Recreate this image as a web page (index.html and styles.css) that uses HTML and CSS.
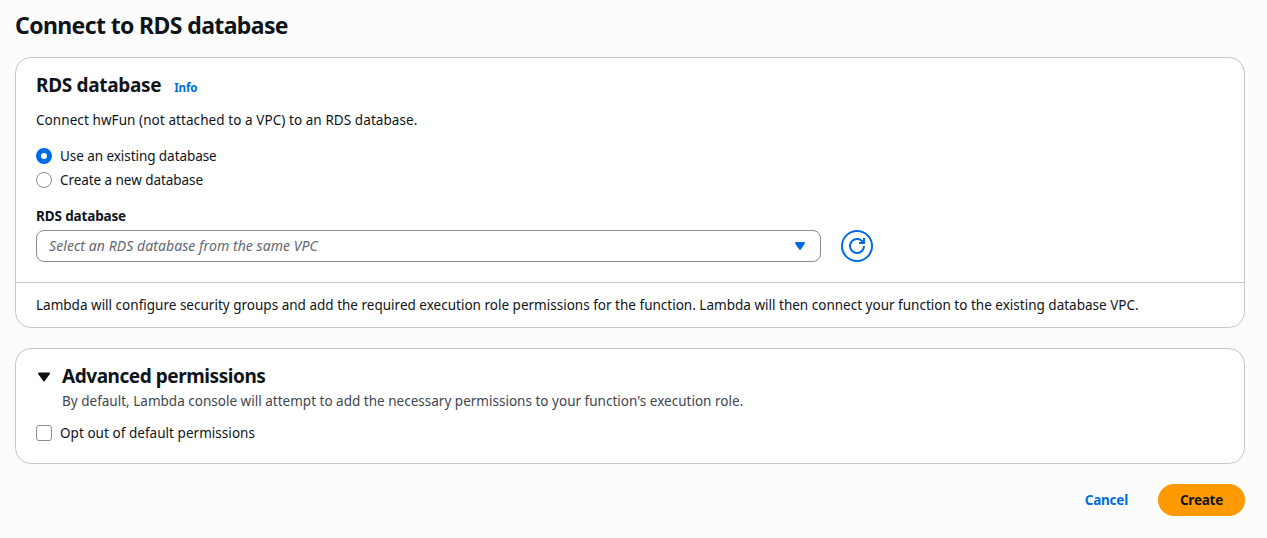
FILE: index.html
```html
<!DOCTYPE html>
<html lang="en">
<head>
<meta charset="utf-8">
<title>Connect to RDS database</title>
<link rel="stylesheet" href="styles.css">
</head>
<body>
<main class="page">
  <h1 class="page-title">Connect to RDS database</h1>

  <section class="card">
    <div class="card-body">
      <header class="card-header">
        <h2 class="card-title">RDS database</h2>
        <a class="info">Info</a>
      </header>
      <p class="intro">Connect hwFun (not attached to a VPC) to an RDS database.</p>
      <div class="radios">
        <div class="option"><span class="radio radio-on"></span><span class="radio-text">Use an existing database</span></div>
        <div class="option"><span class="radio"></span><span class="radio-text">Create a new database</span></div>
      </div>
      <div class="label">RDS database</div>
      <div class="field">
        <div class="select">
          <span class="placeholder">Select an RDS database from the same VPC</span>
          <svg class="caret" width="16" height="16" viewBox="0 0 16 16"><path d="M4 5h8l-4 6z" fill="#006ce0" stroke="#006ce0" stroke-width="2" stroke-linejoin="round"/></svg>
        </div>
        <div class="refresh">
          <svg width="16" height="16" viewBox="0 0 16 16" fill="none" stroke="#006ce0" stroke-width="2"><path d="M10 5h5V0"/><path d="M15 8a6.957 6.957 0 0 1-7 7 6.957 6.957 0 0 1-7-7 6.957 6.957 0 0 1 7-7 6.870 6.870 0 0 1 6.300 4"/></svg>
        </div>
      </div>
    </div>
    <footer class="card-footer">Lambda will configure security groups and add the required execution role permissions for the function. Lambda will then connect your function to the existing database VPC.</footer>
  </section>

  <section class="card card-advanced">
    <header class="expander">
      <svg class="expander-icon" width="16" height="16" viewBox="0 0 16 16"><path d="M3 4.500h10l-5 7z" fill="#0f141a" stroke="#0f141a" stroke-width="2" stroke-linejoin="round"/></svg>
      <div>
        <h2 class="card-title card-title-advanced">Advanced permissions</h2>
        <p class="description">By default, Lambda console will attempt to add the necessary permissions to your function's execution role.</p>
      </div>
    </header>
    <div class="option"><span class="checkbox"></span><span class="checkbox-text">Opt out of default permissions</span></div>
  </section>

  <div class="actions">
    <a class="cancel">Cancel</a>
    <button class="create" type="button">Create</button>
  </div>
</main>
</body>
</html>
```
FILE: styles.css
```css
* { box-sizing: border-box; }
body {
  margin: 0;
  background: #fcfcfd;
  color: #0f141a;
  font: 13.5px/20px "Noto Sans", "Open Sans", sans-serif;
}
h1, h2, p { margin: 0; }
.page { padding: 10px 22px 0 15px; }
.page-title { font-size: 23px; line-height: 30px; font-weight: 700; height: 47px; letter-spacing: -0.62px; }
.card {
  background: #fff;
  border: 1px solid #c6c6cd;
  border-radius: 16px;
}
.card-body { padding: 15px 20px 20px; }
.card-header { display: flex; align-items: baseline; gap: 13px; height: 24px; }
.card-title { font-size: 19px; line-height: 24px; font-weight: 700; white-space: nowrap; letter-spacing: -0.32px; }
.card-title-advanced { letter-spacing: -0.45px; }
.info { color: #006ce0; font-size: 11.5px; line-height: 16px; font-weight: 700; letter-spacing: -0.15px; }
.intro { margin-top: 13px; letter-spacing: 0.075px; }
.radios { display: grid; gap: 4px; margin-top: 16px; }
.option { display: flex; align-items: center; gap: 8px; height: 20px; }
.radio { width: 16px; height: 16px; border: 1px solid #8c8c94; border-radius: 50%; background: #fff; }
.radio-on { border: 5px solid #006ce0; }
.radio-text { letter-spacing: -0.06px; }
.checkbox { width: 16px; height: 16px; border: 1px solid #8c8c94; border-radius: 3px; background: #fff; }
.checkbox-text { letter-spacing: 0.04px; }
.label { margin-top: 16px; font-weight: 700; letter-spacing: -0.14px; }
.field { display: flex; gap: 20px; margin-top: 4px; }
.select {
  width: 785px; height: 32px; padding: 0 12px;
  display: flex; align-items: center; justify-content: space-between;
  border: 1px solid #8c8c94; border-radius: 8px;
}
.placeholder { color: #656871; font-size: 14px; font-style: italic; letter-spacing: 0.07px; }
.caret, .expander-icon { display: block; flex: none; }
.refresh {
  width: 32px; height: 32px; border: 2px solid #006ce0; border-radius: 50%;
  display: grid; place-items: center;
}
.card-footer { border-top: 1px solid #c6c6cd; padding: 12px 20px; white-space: nowrap; letter-spacing: 0.008px; }
.card-advanced { margin-top: 20px; height: 116px; padding: 15px 20px; }
.expander { display: flex; gap: 10px; height: 59px; }
.expander-icon { margin-top: 5px; }
.description { color: #424650; margin-top: 3px; letter-spacing: 0.01px; }
.actions { display: flex; justify-content: flex-end; align-items: center; gap: 30px; margin-top: 20px; font-weight: 700; letter-spacing: -0.22px; }
.cancel { color: #006ce0; }
.create {
  width: 87px; height: 32px; padding: 0; border: 0; border-radius: 16px;
  background: #ff9900; color: #0f141a; font: inherit; letter-spacing: inherit;
}
```
